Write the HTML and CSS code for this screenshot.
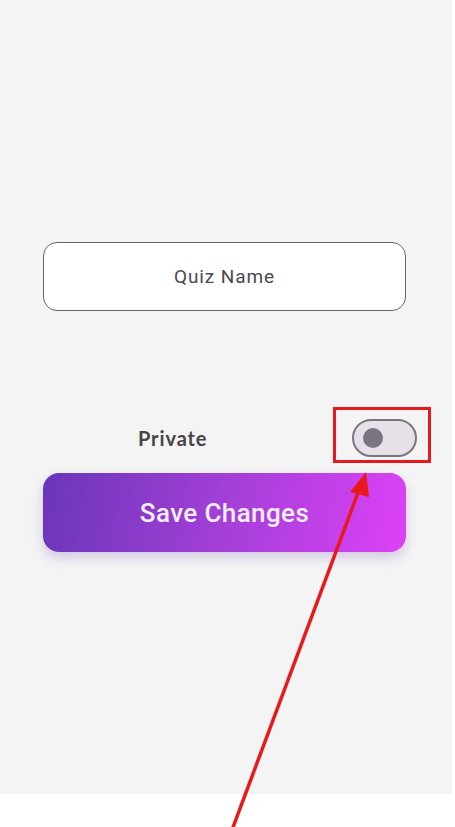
FILE: index.html
```html
<!DOCTYPE html>
<html>
<head>
<meta charset="utf-8">
<link rel="stylesheet" href="styles.css">
</head>
<body>
<div class="screen">
  <div class="field">Quiz Name</div>
  <div class="row">
    <span class="label">Private</span>
    <div class="toggle-wrap">
      <div class="toggle"><span class="knob"></span></div>
    </div>
  </div>
  <button class="save">Save Changes</button>
</div>
<div class="annot-box"></div>
<svg class="arrow" width="455" height="827" viewBox="0 0 455 827">
  <line x1="232" y1="830" x2="359" y2="490" stroke="#e8191c" stroke-width="3.5"/>
  <polygon points="366,472 350,492 369,497" fill="#e8191c"/>
</svg>
</body>
</html>
```
FILE: styles.css
```css
html, body {
  margin: 0;
  padding: 0;
  background: #ffffff;
}
body {
  width: 455px;
  height: 827px;
  overflow: hidden;
  position: relative;
}
.screen {
  width: 452px;
  height: 794px;
  background: #f4f4f4;
  box-sizing: border-box;
  padding: 242px 0 0 43px;
  display: flex;
  flex-direction: column;
}
.field {
  width: 363px;
  height: 69px;
  box-sizing: border-box;
  border: 1.5px solid #66646c;
  border-radius: 14px;
  background: #ffffff;
  display: flex;
  align-items: center;
  justify-content: center;
  font-family: Roboto, "Liberation Sans", sans-serif;
  font-size: 19px;
  letter-spacing: 0.9px;
  color: #4a4950;
}
.row {
  margin-top: 108px;
  width: 363px;
  height: 38px;
  display: flex;
  align-items: center;
}
.label {
  margin-left: 95px;
  font-family: Lato, "Liberation Sans", sans-serif;
  font-weight: 700;
  font-size: 20px;
  letter-spacing: 0.9px;
  color: #454545;
}
.toggle-wrap {
  margin-left: auto;
  margin-right: -11px;
}
.toggle {
  width: 65px;
  height: 38px;
  box-sizing: border-box;
  border: 2.5px solid #7a7580;
  border-radius: 19px;
  background: #e7e0e9;
  display: flex;
  align-items: center;
  padding-left: 9px;
}
.knob {
  width: 20px;
  height: 20px;
  border-radius: 50%;
  background: #7a7580;
}
.save {
  margin-top: 16px;
  width: 363px;
  height: 79px;
  border: none;
  border-radius: 16px;
  background: linear-gradient(100deg, #6a36b9 0%, #a33fd7 50%, #dd41f7 100%);
  box-shadow: 0 6px 12px rgba(110, 80, 170, 0.25);
  font-family: Roboto, "Liberation Sans", sans-serif;
  font-weight: 500;
  font-size: 26px;
  letter-spacing: 0.4px;
  color: #f4eef8;
  padding: 0;
}
.annot-box {
  position: absolute;
  left: 333px;
  top: 407px;
  width: 92px;
  height: 50px;
  border: 3px solid #e8191c;
}
.arrow {
  position: absolute;
  left: 0;
  top: 0;
  pointer-events: none;
}
```
